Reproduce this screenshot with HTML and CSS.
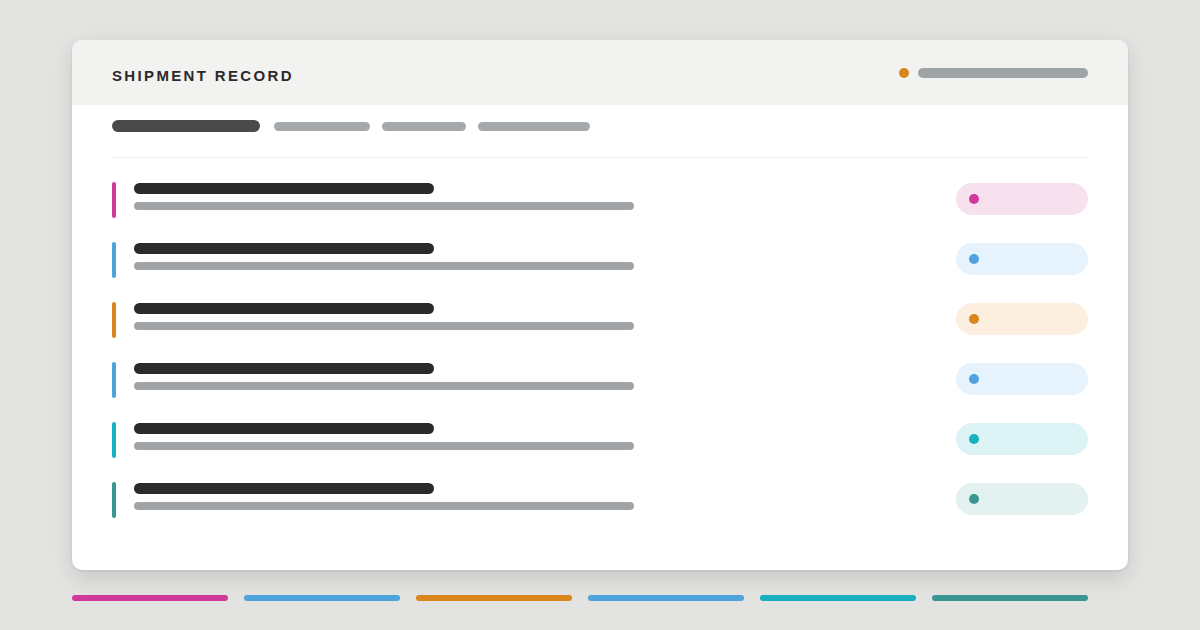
FILE: index.html
```html
<!DOCTYPE html>
<html>
<head>
<meta charset="utf-8">
<link rel="stylesheet" href="styles.css">
</head>
<body>
<div class="page">
  <div class="card">
    <div class="card-header">
      <div class="title">SHIPMENT RECORD</div>
      <div class="status">
        <span class="status-dot"></span>
        <span class="status-bar"></span>
      </div>
    </div>
    <div class="card-body">
      <div class="tabs">
        <span class="tab tab-active"></span>
        <span class="tab" style="width:96px"></span>
        <span class="tab" style="width:84px"></span>
        <span class="tab" style="width:112px"></span>
      </div>
      <div class="divider"></div>
      <div class="rows">
        <div class="row c-pink"><span class="accent"></span><div class="lines"><span class="l1"></span><span class="l2"></span></div><span class="pill"><span class="dot"></span></span></div>
        <div class="row c-blue"><span class="accent"></span><div class="lines"><span class="l1"></span><span class="l2"></span></div><span class="pill"><span class="dot"></span></span></div>
        <div class="row c-orange"><span class="accent"></span><div class="lines"><span class="l1"></span><span class="l2"></span></div><span class="pill"><span class="dot"></span></span></div>
        <div class="row c-blue"><span class="accent"></span><div class="lines"><span class="l1"></span><span class="l2"></span></div><span class="pill"><span class="dot"></span></span></div>
        <div class="row c-cyan"><span class="accent"></span><div class="lines"><span class="l1"></span><span class="l2"></span></div><span class="pill"><span class="dot"></span></span></div>
        <div class="row c-teal"><span class="accent"></span><div class="lines"><span class="l1"></span><span class="l2"></span></div><span class="pill"><span class="dot"></span></span></div>
      </div>
    </div>
  </div>
  <div class="legend">
    <span class="lg c-pink"></span>
    <span class="lg c-blue"></span>
    <span class="lg c-orange"></span>
    <span class="lg c-blue"></span>
    <span class="lg c-cyan"></span>
    <span class="lg c-teal"></span>
  </div>
</div>
</body>
</html>
```

FILE: styles.css
```css
html, body {
  margin: 0;
  padding: 0;
  background: #e3e3e2;
  font-family: "Liberation Sans", Arial, sans-serif;
}
.page {
  width: 1200px;
  height: 630px;
  box-sizing: border-box;
  padding: 40px 72px 0;
}
.card {
  height: 530px;
  background: #ffffff;
  border-radius: 10px;
  overflow: hidden;
  box-shadow: 0 8px 22px rgba(0,0,0,0.13), 0 1px 3px rgba(0,0,0,0.08);
}
.card-header {
  height: 65px;
  background: #f2f2f1;
  display: flex;
  align-items: center;
  justify-content: space-between;
  padding: 0 40px;
  box-sizing: border-box;
}
.title {
  font-size: 15px;
  font-weight: bold;
  letter-spacing: 2.35px;
  color: #2a2a2a;
  padding-top: 6px;
}
.status {
  display: flex;
  align-items: center;
  gap: 9px;
  padding-top: 1px;
}
.status-dot {
  width: 10px;
  height: 10px;
  border-radius: 50%;
  background: #d9861c;
}
.status-bar {
  width: 170px;
  height: 10px;
  border-radius: 5px;
  background: #9ea3a5;
}
.card-body {
  padding: 15px 40px 0;
}
.tabs {
  display: flex;
  align-items: center;
  gap: 12px;
  height: 12px;
}
.tab {
  height: 9px;
  border-radius: 5px;
  background: #a6a9ab;
}
.tab-active {
  width: 148px;
  height: 12px;
  border-radius: 6px;
  background: #4a4a4a;
  margin-right: 2px;
}
.divider {
  height: 1px;
  background: #efefee;
  margin-top: 25px;
}
.rows {
  margin-top: 24px;
  display: flex;
  flex-direction: column;
  gap: 24px;
}
.row {
  display: flex;
  align-items: flex-start;
  height: 36px;
}
.accent {
  width: 4px;
  height: 36px;
  border-radius: 2px;
  background: var(--c);
}
.lines {
  margin-left: 18px;
  padding-top: 1px;
  display: flex;
  flex-direction: column;
  gap: 8px;
}
.l1 {
  width: 300px;
  height: 11px;
  border-radius: 6px;
  background: #2a2a2a;
}
.l2 {
  width: 500px;
  height: 8px;
  border-radius: 4px;
  background: #a1a4a6;
}
.pill {
  margin-left: auto;
  margin-top: 1px;
  width: 132px;
  height: 32px;
  border-radius: 16px;
  background: var(--bg);
  display: flex;
  align-items: center;
  padding-left: 13px;
  box-sizing: border-box;
}
.dot {
  width: 10px;
  height: 10px;
  border-radius: 50%;
  background: var(--c);
}
.legend {
  margin-top: 25px;
  width: 1016px;
  display: flex;
  gap: 16px;
}
.lg {
  flex: 1;
  height: 6px;
  border-radius: 3px;
  background: var(--c);
}
.c-pink { --c: #d0399a; --bg: #f8e1ee; }
.c-blue { --c: #4fa3dc; --bg: #e6f3fc; }
.c-orange { --c: #d9861c; --bg: #fcefe0; }
.c-cyan { --c: #17b0c0; --bg: #ddf4f7; }
.c-teal { --c: #3a9690; --bg: #e3f1f0; }
```
